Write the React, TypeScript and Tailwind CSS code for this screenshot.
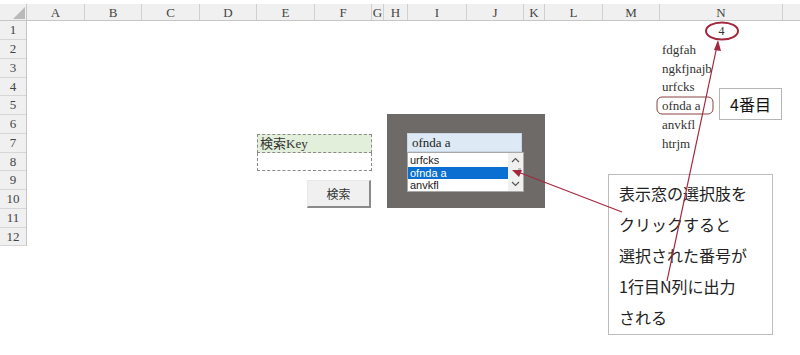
import React from 'react'

const cols = [
  { label: 'A', w: 'w-[58px]' },
  { label: 'B', w: 'w-[57px]' },
  { label: 'C', w: 'w-[58px]' },
  { label: 'D', w: 'w-[57px]' },
  { label: 'E', w: 'w-[58px]' },
  { label: 'F', w: 'w-[57px]' },
  { label: 'G', w: 'w-[12px]' },
  { label: 'H', w: 'w-[24px]' },
  { label: 'I', w: 'w-[59px]' },
  { label: 'J', w: 'w-[57px]' },
  { label: 'K', w: 'w-[21px]' },
  { label: 'L', w: 'w-[58px]' },
  { label: 'M', w: 'w-[57px]' },
  { label: 'N', w: 'w-[123px]' },
]

const rows = [
  { n: 1, h: 'h-[19px]' },
  { n: 2, h: 'h-[19px]' },
  { n: 3, h: 'h-[19px]' },
  { n: 4, h: 'h-[18px]' },
  { n: 5, h: 'h-[19px]' },
  { n: 6, h: 'h-[19px]' },
  { n: 7, h: 'h-[19px]' },
  { n: 8, h: 'h-[18px]' },
  { n: 9, h: 'h-[19px]' },
  { n: 10, h: 'h-[19px]' },
  { n: 11, h: 'h-[19px]' },
  { n: 12, h: 'h-[18px]' },
]

const nValues = [
  { text: 'fdgfah', row: 'row-start-2' },
  { text: 'ngkfjnajb', row: 'row-start-3' },
  { text: 'urfcks', row: 'row-start-4' },
  { text: 'ofnda a', row: 'row-start-5' },
  { text: 'anvkfl', row: 'row-start-6' },
  { text: 'htrjm', row: 'row-start-7' },
]

const serif = "font-['Liberation_Serif','Noto_Sans_CJK_JP',serif]"

function Sheet() {
  return (
    <div className={`pt-[4px] ${serif}`}>
      {/* column headers */}
      <div className="flex h-[17px] bg-[#f0f0f0] border-b border-[#c6c6c6]">
        <div className="w-[27px] shrink-0 border-r border-[#c6c6c6] flex items-end justify-end pr-[1px] pb-[1px]">
          <svg width="12" height="12" viewBox="0 0 12 12">
            <polygon points="12,0 12,12 0,12" fill="#b9b9b9" />
          </svg>
        </div>
        {cols.map(c => (
          <div
            key={c.label}
            className={`${c.w} shrink-0 border-r border-[#d0d0d0] text-[13px] leading-[17px] text-[#444] text-center`}
          >
            {c.label}
          </div>
        ))}
        <div className="flex-1" />
      </div>

      <div className="flex">
        {/* row headers */}
        <div className="w-[27px] shrink-0 bg-[#f0f0f0] border-r border-[#c6c6c6]">
          {rows.map(r => (
            <div
              key={r.n}
              className={`${r.h} border-b border-[#d6d6d6] text-[13px] text-[#444] flex items-center justify-center`}
            >
              {r.n}
            </div>
          ))}
        </div>

        {/* cells */}
        <div className="grid grid-cols-[58px_57px_58px_57px_58px_57px_12px_24px_59px_57px_21px_58px_57px_123px] grid-rows-[19px_19px_19px_18px_19px_19px_19px_18px_19px_19px_19px_18px]">
          <div className="col-start-14 row-start-1 flex items-center justify-center text-[12px] text-[#333]">4</div>
          {nValues.map(v => (
            <div key={v.text} className={`col-start-14 ${v.row} flex items-center pl-[2px] text-[13px] text-[#333]`}>
              {v.text}
            </div>
          ))}
          <div className="col-start-5 col-span-2 row-start-7 bg-[#e2efda] border border-dashed border-[#8a8a8a] flex items-center pl-[2px] text-[13px] text-[#333]">
            検索Key
          </div>
          <div className="col-start-5 col-span-2 row-start-8 border-x border-b border-dashed border-[#8a8a8a]" />
        </div>
      </div>
    </div>
  )
}

function SearchForm() {
  return (
    <div className="absolute left-[387px] top-[114px] w-[158px] h-[94px] bg-[#6d6a68] pl-[20px] pt-[19px]">
      <div className="w-[115px] h-[19px] bg-[#dde9f5] border border-[#c9d6e3] flex items-center pl-[4px] text-[13px] text-[#222] font-['Liberation_Serif',serif]">
        ofnda a
      </div>
      <div className="w-[117px] h-[40px] bg-white border border-[#a8a8a8] flex font-['Liberation_Sans',sans-serif]">
        <div className="flex-1 flex flex-col pt-[1px] text-[11px] leading-[12.5px] text-[#222]">
          <div className="pl-[2px]">urfcks</div>
          <div className="pl-[2px] bg-[#0a6fd0] text-white">ofnda a</div>
          <div className="pl-[2px]">anvkfl</div>
        </div>
        <div className="w-[15px] bg-[#f0f0f0] flex flex-col items-center justify-between py-[4px] relative">
          <svg width="9" height="6" viewBox="0 0 9 6">
            <path d="M1 5 L4.5 1.5 L8 5" stroke="#555" strokeWidth="1.2" fill="none" />
          </svg>
          <div className="absolute right-[2px] top-[15px] w-[3px] h-[6px] bg-[#bdbdbd]" />
          <svg width="9" height="6" viewBox="0 0 9 6">
            <path d="M1 1 L4.5 4.5 L8 1" stroke="#555" strokeWidth="1.2" fill="none" />
          </svg>
        </div>
      </div>
    </div>
  )
}

function Annotations() {
  return (
    <>
      <button className="absolute left-[307px] top-[180px] w-[64px] h-[28px] bg-[#f0f0f0] border-t border-l border-[#e8e8e8] border-r-2 border-b-2 border-r-[#8a8a8a] border-b-[#8a8a8a] text-[12px] text-[#333] font-['Noto_Sans_CJK_JP',sans-serif]">
        検索
      </button>

      <div className="absolute left-[719px] top-[88px] w-[63px] h-[32px] bg-white border border-[#b5b5b5] flex items-center justify-center text-[16px] text-[#111] font-['Noto_Sans_CJK_JP',sans-serif]">
        4番目
      </div>

      <div className="absolute left-[608px] top-[174px] w-[165px] h-[161px] bg-white border border-[#bdbdbd] pl-[10px] pt-[3px] text-[16px] leading-[31px] text-[#222] font-['Noto_Sans_CJK_JP',sans-serif]">
        <div>表示窓の選択肢を</div>
        <div>クリックすると</div>
        <div>選択された番号が</div>
        <div>1行目N列に出力</div>
        <div>される</div>
      </div>

      <svg className="absolute left-0 top-0 pointer-events-none" width="800" height="355" viewBox="0 0 800 355">
        <ellipse cx="722" cy="31" rx="16" ry="8.5" fill="none" stroke="#a3283e" strokeWidth="2" />
        <rect x="657" y="97" width="56" height="17" rx="5" fill="none" stroke="#8e4040" strokeWidth="1" />
        <line x1="622" y1="212" x2="518" y2="172" stroke="#a3283e" strokeWidth="1.2" />
        <polygon points="512,170 522,170 519,177" fill="#a3283e" />
        <line x1="667" y1="281" x2="717" y2="46" stroke="#a3283e" strokeWidth="1.2" />
        <polygon points="718,40 714,50 721,51" fill="#a3283e" />
      </svg>
    </>
  )
}

export default function App() {
  return (
    <div className="relative w-[800px] h-[355px] bg-white overflow-hidden">
      <Sheet />
      <SearchForm />
      <Annotations />
    </div>
  )
}
